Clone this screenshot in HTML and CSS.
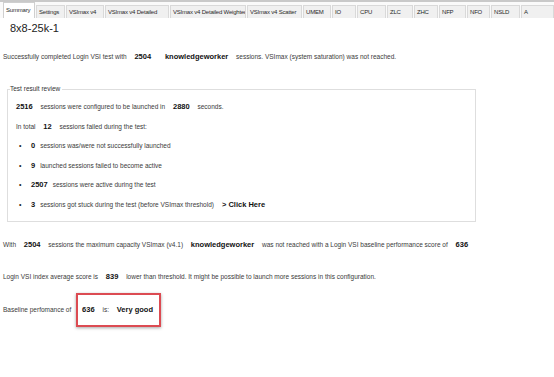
FILE: index.html
```html
<!DOCTYPE html>
<html>
<head>
<meta charset="utf-8">
<link rel="stylesheet" href="styles.css">
</head>
<body>
<div class="tabs">
  <div class="tab active">Summary</div>
  <div class="tab">Settings</div>
  <div class="tab">VSImax v4</div>
  <div class="tab">VSImax v4 Detailed</div>
  <div class="tab">VSImax v4 Detailed Weighted</div>
  <div class="tab">VSImax v4 Scatter</div>
  <div class="tab">UMEM</div>
  <div class="tab">IO</div>
  <div class="tab">CPU</div>
  <div class="tab">ZLC</div>
  <div class="tab">ZHC</div>
  <div class="tab">NFP</div>
  <div class="tab">NFO</div>
  <div class="tab">NSLD</div>
  <div class="tab">A</div>
</div>
<div class="title">8x8-25k-1</div>
<p class="line summary">Successfully completed Login VSI test with <b>2504</b> <b>knowledgeworker</b> sessions. VSImax (system saturation) was not reached.</p>
<fieldset class="review">
  <legend>Test result review</legend>
  <div class="row"><b class="first">2516</b> sessions were configured to be launched in <b>2880</b> seconds.</div>
  <div class="row">In total <b>12</b> sessions failed during the test:</div>
  <div class="row item"><span class="dot">•</span><b class="first">0</b> sessions was/were not successfully launched</div>
  <div class="row item"><span class="dot">•</span><b class="first">9</b> launched sessions failed to become active</div>
  <div class="row item"><span class="dot">•</span><b class="first">2507</b> sessions were active during the test</div>
  <div class="row item"><span class="dot">•</span><b class="first">3</b> sessions got stuck during the test (before VSImax threshold) <b class="link">&gt; Click Here</b></div>
</fieldset>
<p class="line with">With <b>2504</b> sessions the maximum capacity VSImax (v4.1) <b>knowledgeworker</b> was not reached with a Login VSI baseline performance score of <b>636</b></p>
<p class="line index">Login VSI index average score is <b>839</b> lower than threshold. It might be possible to launch more sessions in this configuration.</p>
<div class="baseline">Baseline perfomance of <span class="score"><b class="first">636</b> is: <b>Very good</b></span></div>
</body>
</html>
```
FILE: styles.css
```css
html, body {
  margin: 0;
  padding: 0;
}
body {
  width: 554px;
  height: 377px;
  overflow: hidden;
  background: #fff;
  font-family: "Liberation Sans", Arial, sans-serif;
  font-size: 6.5px;
  color: #3a3a3a;
}
.tabs {
  display: grid;
  grid-template-columns: 33px 30px 39px 65px 77px 56px 29px 25px 30px 27px 25px 28px 24px 30px 34px;
  align-items: end;
  height: 16px;
  padding-left: 3px;
  border-top: 2px solid #c9c9c9;
  background: #fafafa;
}
.tab {
  height: 12px;
  line-height: 12px;
  padding-left: 2px;
  margin-right: 1px;
  background: #f0f0f0;
  border: 1px solid #d9d9d9;
  border-bottom: none;
  color: #2a2a2a;
  font-size: 6px;
  letter-spacing: -0.2px;
  white-space: nowrap;
  overflow: hidden;
}
.tab.active {
  height: 15px;
  line-height: 14px;
  background: #fff;
  border-color: #cfcfcf;
}
.title {
  margin: 3px 0 0 10px;
  height: 14px;
  line-height: 14px;
  font-size: 11px;
  color: #222;
}
.line {
  margin: 0 0 0 3px;
  line-height: 10px;
  height: 10px;
  white-space: nowrap;
}
b {
  font-size: 7.5px;
  color: #111;
  margin: 0 6px;
}
b.first {
  margin-left: 0;
}
.summary {
  margin-top: 17px;
}
.review {
  margin: 22px 0 0 7px;
  width: 451px;
  padding: 8px 8px 11px 8px;
  border: 1px solid #dedede;
  display: flex;
  flex-direction: column;
  gap: 9.5px;
}
.review legend {
  padding: 0 2px 0 0;
  margin-left: -6px;
  line-height: 10px;
  color: #333;
}
.row {
  line-height: 10px;
  height: 10px;
  white-space: nowrap;
}
.item {
  display: flex;
  align-items: center;
}
.dot {
  width: 15px;
  padding-left: 3px;
  box-sizing: border-box;
  font-size: 7px;
  color: #222;
}
.item b {
  margin-right: 5px;
}
.link {
  margin-left: 8px;
}
.with {
  margin-top: 18px;
}
.index {
  margin-top: 22px;
}
.baseline {
  display: flex;
  align-items: center;
  margin: 11px 0 0 3px;
  white-space: pre;
}
.score {
  display: inline-block;
  padding: 10px 6px 10px 4px;
  line-height: 10px;
  border: 2px solid #dc4b52;
  box-shadow: 0 1px 3px rgba(0,0,0,0.35);
  margin-left: 3px;
}
.score b:last-child {
  margin-right: 0;
}
```
